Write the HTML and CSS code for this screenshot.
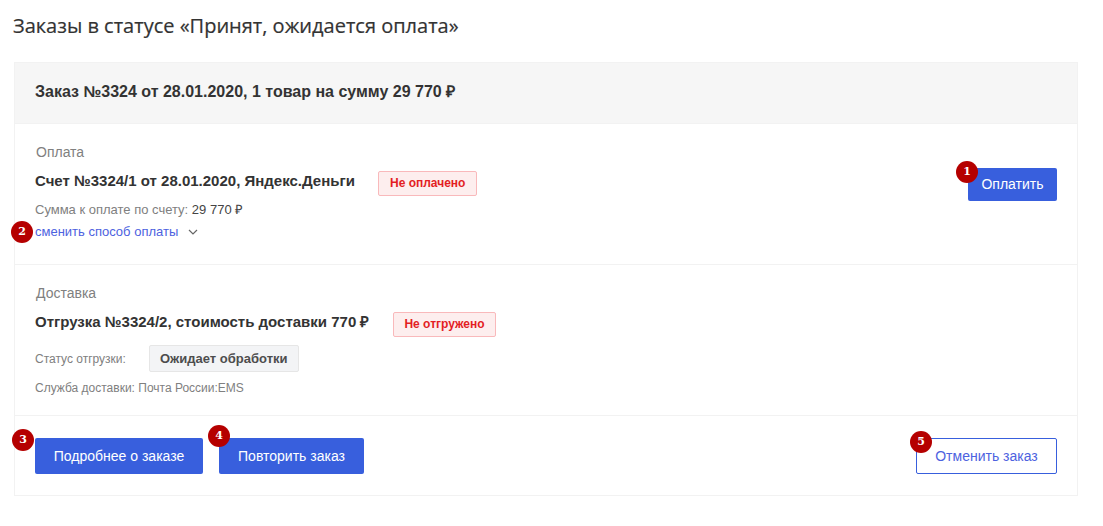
FILE: index.html
```html
<!DOCTYPE html>
<html lang="ru">
<head>
  <meta charset="UTF-8" />
  <title>Заказы</title>
  <link rel="stylesheet" href="styles.css">
</head>
<body>

  <h1>Заказы в статусе «Принят, ожидается оплата»</h1>

  <div class="order">
    <div class="order-head">Заказ №3324 от 28.01.2020, 1 товар на сумму 29 770 ₽</div>

    <!-- Payment -->
    <div class="section section-pay">
      <div class="section-main">
        <div class="section-label">Оплата</div>
        <div class="section-title">
          <span>Счет №3324/1 от 28.01.2020, Яндекс.Деньги</span>
          <span class="state">Не оплачено</span>
        </div>
        <div class="small-line sum-line">Сумма к оплате по счету: <span class="dark">29 770 ₽</span></div>
        <a class="change-link" href="#">
          <span class="mark mark-2">2</span>
          сменить способ оплаты
          <svg class="chevron" width="10" height="6" viewBox="0 0 10 6"><path d="M1 1l4 4 4-4" fill="none" stroke="#666" stroke-width="1.2"/></svg>
        </a>
      </div>
      <a class="btn btn-pay" href="#"><span class="mark mark-1">1</span>Оплатить</a>
    </div>

    <!-- Delivery -->
    <div class="section section-ship">
      <div class="section-label">Доставка</div>
      <div class="section-title">
        <span>Отгрузка №3324/2, стоимость доставки 770 ₽</span>
        <span class="state">Не отгружено</span>
      </div>
      <div class="ship-status">
        <span class="ship-status-label">Статус отгрузки:</span>
        <span class="chip">Ожидает обработки</span>
      </div>
      <div class="small-line">Служба доставки: Почта России:EMS</div>
    </div>

    <div class="order-foot">
      <a class="btn btn-big btn-details" href="#"><span class="mark mark-3">3</span>Подробнее о заказе</a>
      <a class="btn btn-big btn-repeat" href="#"><span class="mark mark-4">4</span>Повторить заказ</a>
      <a class="btn btn-big btn-cancel" href="#"><span class="mark mark-5">5</span>Отменить заказ</a>
    </div>
  </div>

</body>
</html>
```

FILE: styles.css
```css
* {
  margin: 0;
  padding: 0;
  box-sizing: border-box;
}

body {
  background-color: #fff;
  font-family: 'Liberation Sans', Arial, sans-serif;
  color: #333;
  padding: 13px 25px 30px 14px;
}

h1 {
  font-family: 'Open Sans', sans-serif;
  font-size: 20px;
  font-weight: 400;
  line-height: 25px;
  color: #333;
  margin-left: -1px;
  margin-bottom: 24px;
  -webkit-text-stroke: 0.2px #333;
}

a {
  text-decoration: none;
}

/* Order card */
.order {
  border: 1px solid #f2f2f2;
}

.order-head {
  background-color: #f6f6f6;
  height: 61px;
  padding-left: 20px;
  font-size: 16px;
  font-weight: 700;
  line-height: 58px;
  border-bottom: 1px solid #f2f2f2;
}

.section {
  padding: 20px 20px 0;
  border-bottom: 1px solid #f2f2f2;
}

.section-pay {
  height: 141px;
  display: flex;
  justify-content: space-between;
  align-items: flex-start;
}

.section-ship {
  height: 151px;
}

.section-label {
  font-size: 14px;
  line-height: 16px;
  color: #808080;
  margin-left: 1px;
}

.section-title {
  display: flex;
  align-items: flex-start;
  font-size: 15px;
  font-weight: 700;
  line-height: 30px;
  margin-top: 6px;
}

.state {
  margin-left: 23.5px;
  margin-top: 5px;
  height: 25px;
  padding: 0 10.5px;
  border: 1px solid #f9b9bb;
  border-radius: 2px;
  background-color: #fdeeee;
  color: #e31e24;
  font-size: 12px;
  font-weight: 700;
  line-height: 23px;
}

.small-line {
  font-size: 12px;
  line-height: 16px;
  color: #808080;
  margin-top: 8px;
}

.sum-line {
  font-size: 13px;
  margin-top: 6px;
}

.dark {
  color: #444;
}

.change-link {
  position: relative;
  display: block;
  margin-top: 6px;
  font-size: 13px;
  line-height: 16px;
  color: #4d62e0;
}

.chevron {
  margin-left: 6px;
  vertical-align: 1px;
}

.ship-status {
  display: flex;
  align-items: center;
  margin-top: 8px;
  font-size: 12px;
  color: #808080;
}

.ship-status-label {
  width: 114px;
}

.chip {
  height: 27px;
  padding: 0 10px;
  border: 1px solid #e6e6e6;
  border-radius: 2px;
  background-color: #f3f4f6;
  color: #4d4d4d;
  font-size: 13px;
  font-weight: 700;
  line-height: 25px;
}

/* Buttons */
.btn {
  position: relative;
  display: block;
  background-color: #385fdd;
  color: #fff;
  border-radius: 2px;
  font-size: 14px;
  text-align: center;
}

.btn-pay {
  width: 89px;
  height: 33px;
  line-height: 33px;
  margin-top: 24px;
}

.order-foot {
  display: flex;
  padding: 22px 20px 21px;
  height: 79px;
}

.btn-big {
  height: 36px;
  line-height: 36px;
}

.btn-details {
  width: 168px;
  margin-right: 16px;
}

.btn-repeat {
  width: 145px;
}

.btn-cancel {
  width: 141px;
  margin-left: auto;
  background-color: #fff;
  border: 1px solid #385fdd;
  line-height: 34px;
  color: #4d62e0;
}

/* Numbered marks */
.mark {
  position: absolute;
  width: 22px;
  height: 22px;
  border-radius: 50%;
  background-color: #b50000;
  color: #fff;
  font-family: 'DejaVu Serif', serif;
  font-size: 11px;
  font-weight: 700;
  line-height: 21px;
  text-align: center;
}

.mark-1 {
  left: -12px;
  top: -7px;
}

.mark-2 {
  left: -24px;
  top: -3px;
}

.mark-3 {
  left: -23px;
  top: -9px;
}

.mark-4 {
  left: -11px;
  top: -13px;
}

.mark-5 {
  left: -7px;
  top: -8px;
}
```
